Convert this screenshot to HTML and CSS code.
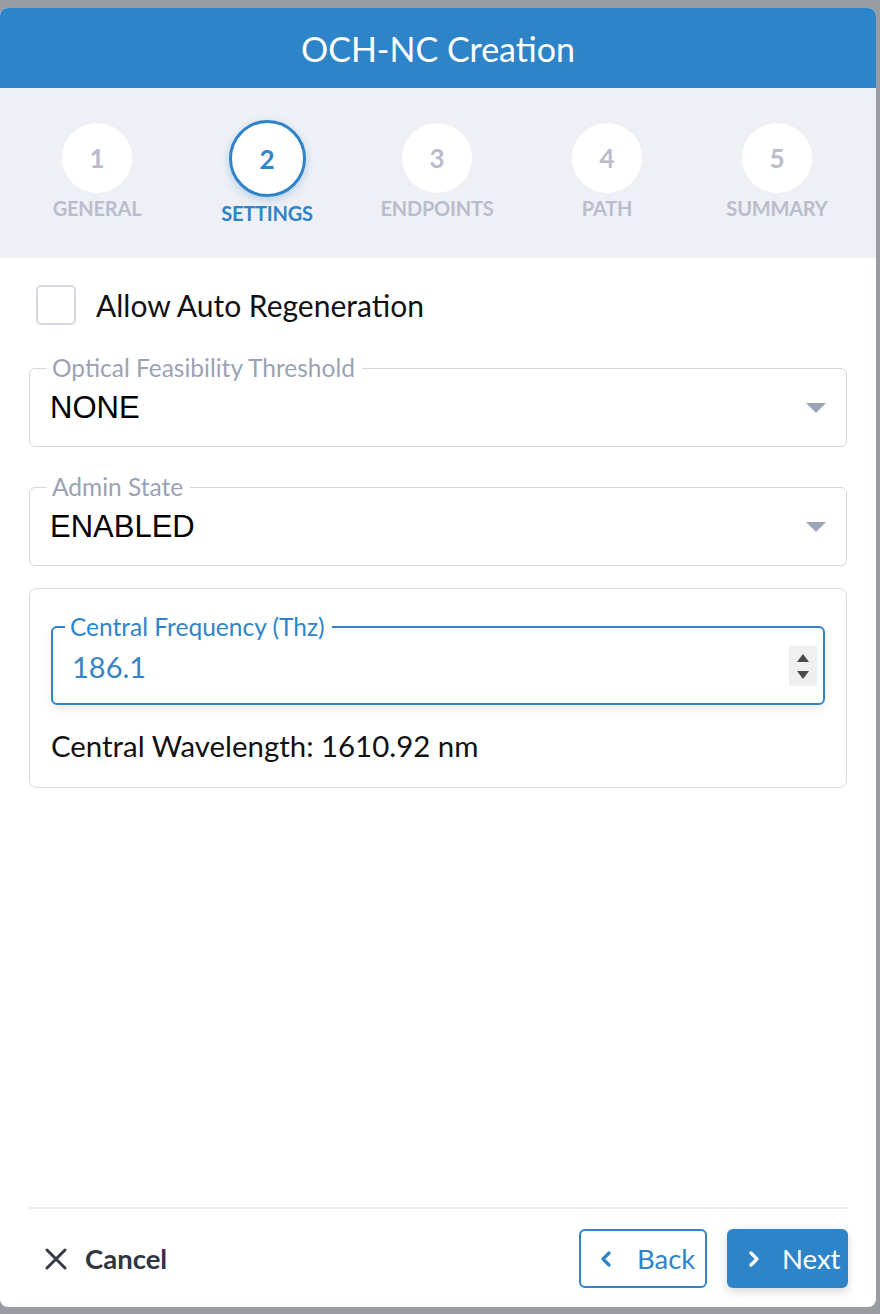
FILE: index.html
```html
<!DOCTYPE html>
<html>
<head>
<meta charset="utf-8">
<link rel="stylesheet" href="styles.css">
</head>
<body>
<div class="modal">
  <div class="modal-header">OCH-NC Creation</div>
  <div class="stepper">
    <div class="step"><div class="circle">1</div><div class="step-label">General</div></div>
    <div class="step active"><div class="circle">2</div><div class="step-label">Settings</div></div>
    <div class="step"><div class="circle">3</div><div class="step-label">Endpoints</div></div>
    <div class="step"><div class="circle">4</div><div class="step-label">Path</div></div>
    <div class="step"><div class="circle">5</div><div class="step-label">Summary</div></div>
  </div>
  <div class="content">
    <label class="check-row">
      <span class="checkbox"></span>
      <span class="check-label">Allow Auto Regeneration</span>
    </label>
    <fieldset class="field">
      <legend>Optical Feasibility Threshold</legend>
      <div class="select-row"><span class="select-value">NONE</span><span class="caret"></span></div>
    </fieldset>
    <fieldset class="field">
      <legend>Admin State</legend>
      <div class="select-row"><span class="select-value">ENABLED</span><span class="caret"></span></div>
    </fieldset>
    <div class="card">
      <fieldset class="field focused">
        <legend>Central Frequency (Thz)</legend>
        <div class="number-row">
          <span class="number-value">186.1</span>
          <span class="spinner"><span class="up"></span><span class="down"></span></span>
        </div>
      </fieldset>
      <div class="wavelength">Central Wavelength: 1610.92 nm</div>
    </div>
  </div>
  <div class="footer">
    <button class="btn-cancel">
      <svg width="22" height="22" viewBox="0 0 22 22"><path d="M2 2 L20 20 M20 2 L2 20" stroke="#343a46" stroke-width="3" stroke-linecap="round"/></svg>
      <span>Cancel</span>
    </button>
    <div class="nav-buttons">
      <button class="btn btn-back">
        <svg width="12" height="16" viewBox="0 0 12 16"><path d="M9 2 L3 8 L9 14" fill="none" stroke="#2f84c9" stroke-width="3.2" stroke-linecap="round" stroke-linejoin="round"/></svg>
        <span>Back</span>
      </button>
      <button class="btn btn-next">
        <svg width="12" height="16" viewBox="0 0 12 16"><path d="M3 2 L9 8 L3 14" fill="none" stroke="#ffffff" stroke-width="3.2" stroke-linecap="round" stroke-linejoin="round"/></svg>
        <span>Next</span>
      </button>
    </div>
  </div>
</div>
</body>
</html>
```
FILE: styles.css
```css
html, body {
  margin: 0;
  padding: 0;
  background: #9a9ca3;
}
body {
  font-family: "Lato", "Noto Sans", sans-serif;
  padding-top: 8px;
}
.modal {
  width: 876px;
  height: 1299px;
  background: #ffffff;
  border-radius: 8px;
  overflow: hidden;
  display: flex;
  flex-direction: column;
}
.modal-header {
  height: 80px;
  background: #2e84c9;
  color: #ffffff;
  font-size: 34px;
  display: flex;
  align-items: center;
  justify-content: center;
  flex-shrink: 0;
}
.stepper {
  height: 170px;
  background: #eef0f5;
  display: flex;
  padding: 0 14px 0 12px;
  flex-shrink: 0;
}
.step {
  flex: 1;
  display: flex;
  flex-direction: column;
  align-items: center;
  padding-top: 35px;
}
.circle {
  width: 70px;
  height: 70px;
  border-radius: 50%;
  background: #ffffff;
  display: flex;
  align-items: center;
  justify-content: center;
  font-size: 26px;
  font-weight: 700;
  color: #b9bdcb;
  box-sizing: border-box;
}
.step-label {
  margin-top: 3px;
  font-size: 20px;
  font-weight: 700;
  color: #b9bdcb;
  text-transform: uppercase;
  letter-spacing: -0.2px;
}
.step.active .circle {
  width: 77px;
  height: 77px;
  margin-top: -3px;
  border: 3px solid #2f84c9;
  color: #2f84c9;
  box-shadow: 0 3px 8px rgba(47, 132, 201, 0.3);
}
.step.active .step-label {
  color: #2f84c9;
  margin-top: 4px;
}
.content {
  flex: 1;
  padding: 0 29px;
}
.check-row {
  display: flex;
  align-items: center;
  margin-top: 27px;
  margin-left: 7px;
}
.checkbox {
  width: 40px;
  height: 40px;
  box-sizing: border-box;
  border: 2px solid #d6d9df;
  border-radius: 5px;
  background: #ffffff;
}
.check-label {
  margin-left: 20px;
  font-size: 30px;
  color: #111111;
}
.field {
  margin: 0;
  padding: 0 20px 12px 17px;
  border: 1.5px solid #d4d7dd;
  border-radius: 6px;
  min-width: 0;
}
.check-row + .field {
  margin-top: 30px;
}
.field + .field {
  margin-top: 27px;
}
.field legend {
  padding: 0 7px 0 5px;
  font-size: 24.5px;
  line-height: 26px;
  color: #9aa3b5;
}
.select-row {
  height: 53px;
  display: flex;
  align-items: center;
  justify-content: space-between;
}
.select-value {
  font-family: "Liberation Sans", Arial, sans-serif;
  font-size: 31px;
  color: #000000;
  padding-left: 3px;
}
.caret {
  width: 0;
  height: 0;
  border-left: 10px solid transparent;
  border-right: 10px solid transparent;
  border-top: 10px solid #9ca4b7;
}
.card {
  margin-top: 22px;
  border: 1.5px solid #d8dbe0;
  border-radius: 8px;
  padding: 25px 21px 24px 21px;
}
.field.focused {
  border: 2px solid #2f84c9;
  padding: 0 6px 11px 12px;
  box-shadow: 0 4px 8px rgba(0, 0, 0, 0.08);
}
.field.focused legend {
  color: #2f84c9;
}
.number-row {
  height: 52px;
  display: flex;
  align-items: center;
  justify-content: space-between;
}
.number-value {
  font-size: 29px;
  color: #3584c6;
  padding-left: 7px;
}
.spinner {
  width: 28px;
  height: 40px;
  background: #efefef;
  display: flex;
  flex-direction: column;
  align-items: center;
  justify-content: center;
  gap: 9px;
}
.spinner .up {
  width: 0;
  height: 0;
  border-left: 6px solid transparent;
  border-right: 6px solid transparent;
  border-bottom: 8px solid #4a4a4a;
}
.spinner .down {
  width: 0;
  height: 0;
  border-left: 6px solid transparent;
  border-right: 6px solid transparent;
  border-top: 8px solid #4a4a4a;
}
.wavelength {
  margin-top: 23px;
  font-size: 29.4px;
  color: #111111;
}
.footer {
  margin: 0 28px 0 29px;
  border-top: 2px solid #eeeeee;
  padding: 20px 0 19px 0;
  display: flex;
  align-items: center;
  justify-content: space-between;
  flex-shrink: 0;
}
.btn-cancel {
  display: flex;
  align-items: center;
  gap: 18px;
  border: none;
  background: none;
  padding: 0 0 0 16px;
  font-family: "Lato", "Noto Sans", sans-serif;
  font-size: 27.5px;
  font-weight: 700;
  color: #2f3542;
}
.nav-buttons {
  display: flex;
  gap: 20px;
}
.btn {
  height: 59px;
  box-sizing: border-box;
  border-radius: 6px;
  display: flex;
  align-items: center;
  gap: 25px;
  font-family: "Lato", "Noto Sans", sans-serif;
  font-size: 27.5px;
  cursor: pointer;
}
.btn-back {
  width: 128px;
  border: 2px solid #2f84c9;
  background: #ffffff;
  color: #2f84c9;
  padding: 0 0 0 19px;
}
.btn-next {
  width: 121px;
  border: none;
  background: #2e84c9;
  color: #ffffff;
  padding: 0 0 0 21px;
  gap: 22px;
  box-shadow: 0 4px 10px rgba(0, 0, 0, 0.15);
}
```
